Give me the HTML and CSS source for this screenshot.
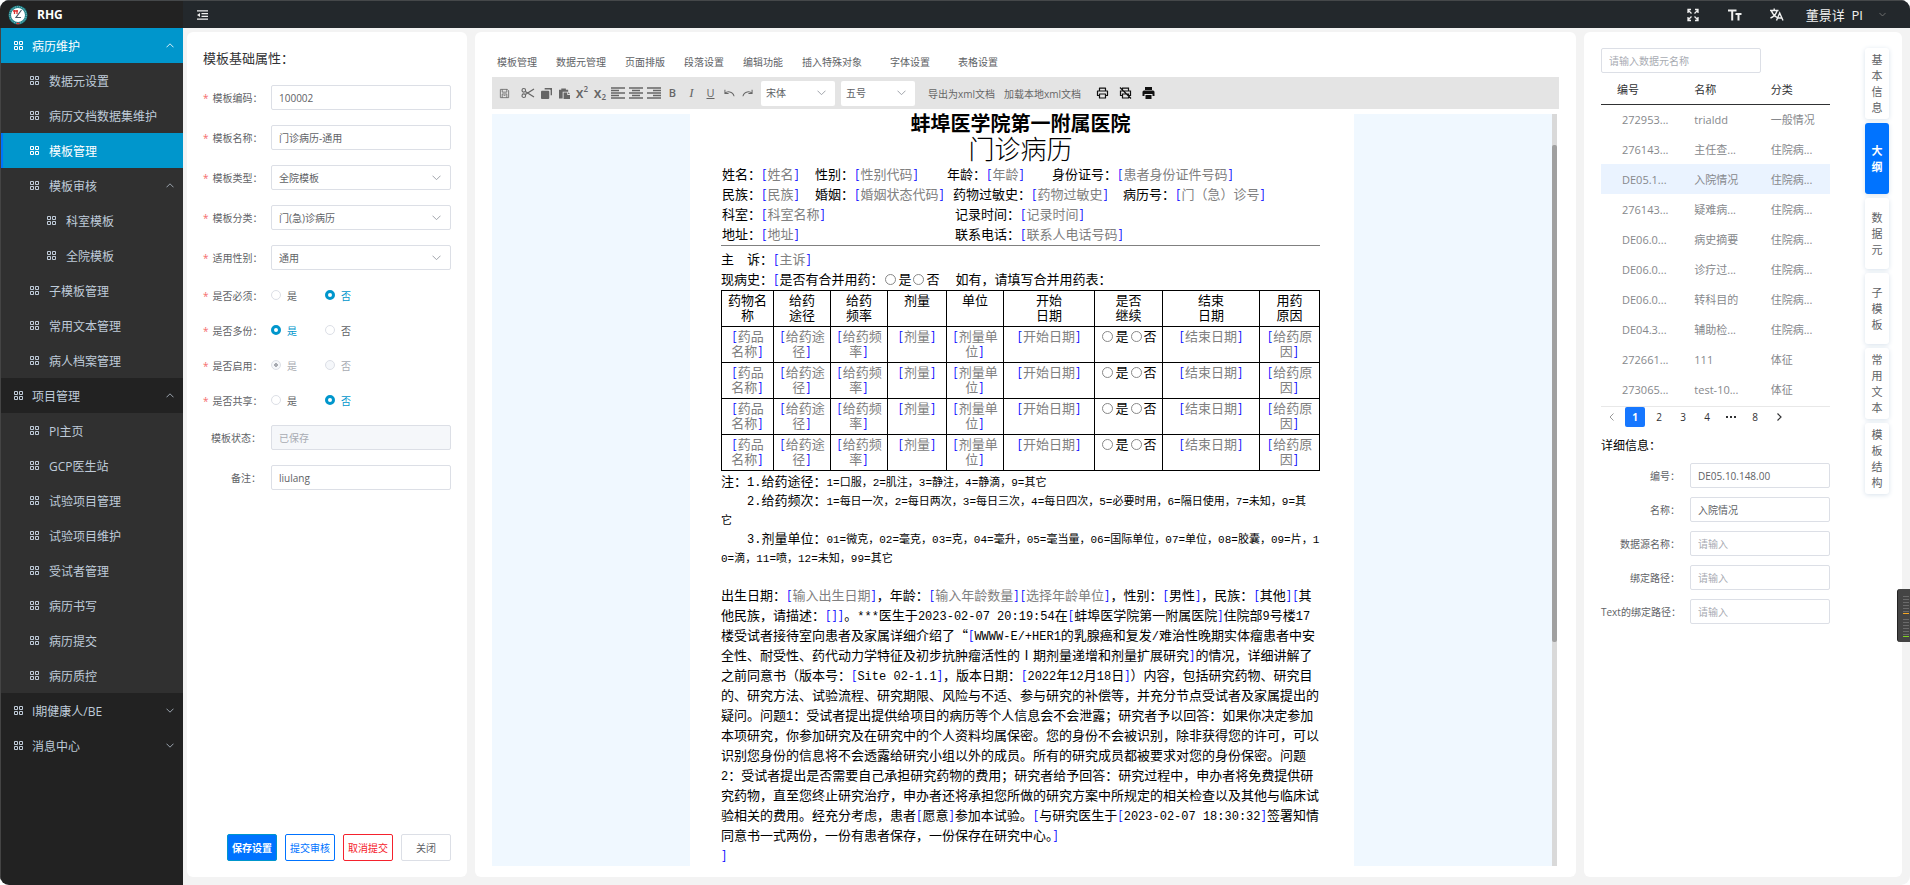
FILE: index.html
```
<!DOCTYPE html>
<html lang="zh-CN">
<head>
<meta charset="utf-8">
<title>RHG</title>
<link rel="stylesheet" href="styles.css">
</head>
<body>
<svg class="defs" aria-hidden="true">
  <symbol id="grid" viewBox="0 0 9 9"><path d="M.5.5h3v3h-3zM5.5.5h3v3h-3zM.5 5.5h3v3h-3zM5.5 5.5h3v3h-3z" fill="none" stroke="currentColor"/></symbol>
  <symbol id="up" viewBox="0 0 8 5"><path d="M.5 4.3 4 .8l3.500 3.500" fill="none" stroke="currentColor"/></symbol>
  <symbol id="down" viewBox="0 0 8 5"><path d="M.5.7 4 4.200 7.500.7" fill="none" stroke="currentColor"/></symbol>
</svg>
<div class="app">
  <header class="brand">
    <svg class="logo" viewBox="0 0 20 20"><circle cx="10" cy="10" r="9.500" fill="#1c7f86"/><circle cx="10" cy="10" r="8.300" fill="none" stroke="#b9dcdc" stroke-width=".8" stroke-dasharray="1 1"/><circle cx="10" cy="10" r="7" fill="#fff"/><path d="M5 6h5M6.500 5v4M9 5v4" stroke="#d33" stroke-width="1.300"/><path d="M13.500 5 8 12.500h5" fill="none" stroke="#4a5a66" stroke-width="1.200"/><path d="M8.500 18.500h3" stroke="#e33" stroke-width="1.500"/></svg>
    <strong>RHG</strong>
  </header>
  <header class="topbar">
    <button class="icon-btn" aria-label="折叠菜单"><svg width="11" height="10" viewBox="0 0 11 10"><path d="M0 .8h11M4.500 3.600H11M4.500 6.400H11M0 9.200h11" stroke="currentColor" stroke-width="1.200"/><path d="M0 5l3-2v4z" fill="currentColor"/></svg></button>
    <div class="tools">
      <button class="icon-btn" aria-label="全屏"><svg width="14" height="14" viewBox="0 0 14 14"><path d="M5.500 5.500 2 2m0 3V1.500h3M8.500 5.500 12 2m0 3V1.500H9M5.500 8.500 2 12m0-3v3.500h3M8.500 8.500 12 12m0-3v3.500H9" fill="none" stroke="currentColor" stroke-width="1.300"/></svg></button>
      <button class="icon-btn" aria-label="字号"><svg width="14" height="12" viewBox="0 0 14 12"><path d="M0 1.500h8.500M4.200 1.500V11.500M7.500 5h6M10.500 5v6.500" fill="none" stroke="currentColor" stroke-width="2"/></svg></button>
      <button class="icon-btn" aria-label="语言"><svg width="14" height="13" viewBox="0 0 14 13"><path d="M0 2.500h8.500M4.200.5v2M1.500 3c1 3 3 5 5.500 6.500M7 3C6 6 4 8.500.5 10M6.500 12.500 9.700 5l3.300 7.500M7.800 10h4" fill="none" stroke="currentColor" stroke-width="1.400"/></svg></button>
      <button class="user">董景详&nbsp; PI<svg width="7" height="5"><use href="#down"/></svg></button>
    </div>
  </header>

  <nav class="side">
    <a href="#" class="l1 on"><svg><use href="#grid"/></svg>病历维护<svg class="arr"><use href="#up"/></svg></a>
    <a href="#" class="l2"><svg><use href="#grid"/></svg>数据元设置</a>
    <a href="#" class="l2"><svg><use href="#grid"/></svg>病历文档数据集维护</a>
    <a href="#" class="l2 on cur"><svg><use href="#grid"/></svg>模板管理</a>
    <a href="#" class="l2"><svg><use href="#grid"/></svg>模板审核<svg class="arr"><use href="#up"/></svg></a>
    <a href="#" class="l2 l3"><svg><use href="#grid"/></svg>科室模板</a>
    <a href="#" class="l2 l3"><svg><use href="#grid"/></svg>全院模板</a>
    <a href="#" class="l2"><svg><use href="#grid"/></svg>子模板管理</a>
    <a href="#" class="l2"><svg><use href="#grid"/></svg>常用文本管理</a>
    <a href="#" class="l2"><svg><use href="#grid"/></svg>病人档案管理</a>
    <a href="#" class="l1"><svg><use href="#grid"/></svg>项目管理<svg class="arr"><use href="#up"/></svg></a>
    <a href="#" class="l2"><svg><use href="#grid"/></svg>PI主页</a>
    <a href="#" class="l2"><svg><use href="#grid"/></svg>GCP医生站</a>
    <a href="#" class="l2"><svg><use href="#grid"/></svg>试验项目管理</a>
    <a href="#" class="l2"><svg><use href="#grid"/></svg>试验项目维护</a>
    <a href="#" class="l2"><svg><use href="#grid"/></svg>受试者管理</a>
    <a href="#" class="l2"><svg><use href="#grid"/></svg>病历书写</a>
    <a href="#" class="l2"><svg><use href="#grid"/></svg>病历提交</a>
    <a href="#" class="l2"><svg><use href="#grid"/></svg>病历质控</a>
    <a href="#" class="l1"><svg><use href="#grid"/></svg>I期健康人/BE<svg class="arr"><use href="#down"/></svg></a>
    <a href="#" class="l1"><svg><use href="#grid"/></svg>消息中心<svg class="arr"><use href="#down"/></svg></a>
  </nav>

  <main class="main">
    <form class="card props">
      <h2>模板基础属性：</h2>
      <div class="row"><label for="code"><em>*</em>模板编码：</label><input id="code" class="ctl" value="100002"></div>
      <div class="row"><label for="name"><em>*</em>模板名称：</label><input id="name" class="ctl" value="门诊病历-通用"></div>
      <div class="row"><label for="type"><em>*</em>模板类型：</label><select id="type" class="ctl"><option>全院模板</option></select></div>
      <div class="row"><label for="cls"><em>*</em>模板分类：</label><select id="cls" class="ctl"><option>门(急)诊病历</option></select></div>
      <div class="row"><label for="sex"><em>*</em>适用性别：</label><select id="sex" class="ctl"><option>通用</option></select></div>
      <div class="row"><span class="lbl"><em>*</em>是否必须：</span><div class="radios"><label><input type="radio" name="r1">是</label><label><input type="radio" name="r1" checked>否</label></div></div>
      <div class="row"><span class="lbl"><em>*</em>是否多份：</span><div class="radios"><label><input type="radio" name="r2" checked>是</label><label><input type="radio" name="r2">否</label></div></div>
      <div class="row"><span class="lbl"><em>*</em>是否启用：</span><div class="radios"><label><input type="radio" name="r3" checked disabled>是</label><label><input type="radio" name="r3" disabled>否</label></div></div>
      <div class="row"><span class="lbl"><em>*</em>是否共享：</span><div class="radios"><label><input type="radio" name="r4">是</label><label><input type="radio" name="r4" checked>否</label></div></div>
      <div class="row"><label for="state">模板状态：</label><input id="state" class="ctl" value="已保存" disabled></div>
      <div class="row"><label for="memo">备注：</label><input id="memo" class="ctl" value="liulang"></div>
      <div class="actions"><button type="button" class="btn primary">保存设置</button><button type="button" class="btn blue">提交审核</button><button type="button" class="btn red">取消提交</button><button type="button" class="btn">关闭</button></div>
    </form>

    <section class="card editor">
      <div class="menus"><button>模板管理</button><button>数据元管理</button><button>页面排版</button><button>段落设置</button><button>编辑功能</button><button>插入特殊对象</button><button class="far">字体设置</button><button class="far">表格设置</button></div>
      <div class="bar">
        <button class="save" aria-label="保存"><svg viewBox="0 0 12 12"><path d="M1.500 1.500h7.500l1.500 1.500v7.500h-9zM3.500 1.500v3h5v-3M3.500 10.500v-4h5v4M5 8h2" fill="none" stroke="currentColor" stroke-width=".9"/></svg></button>
        <button aria-label="剪切"><svg class="w" viewBox="0 0 14 12"><path d="M13 2 4.300 7.500M13 10 4.300 4.500" stroke="currentColor" stroke-width="1.300"/><circle cx="2.800" cy="3.300" r="1.800" fill="none" stroke="currentColor" stroke-width="1.100"/><circle cx="2.800" cy="8.700" r="1.800" fill="none" stroke="currentColor" stroke-width="1.100"/></svg></button>
        <button aria-label="复制"><svg viewBox="0 0 12 12"><path d="M4 0h8v8h-1.500V2.500a1 1 0 0 0-1-1H4z" fill="currentColor"/><rect y="3" width="9" height="9" rx="1" fill="currentColor"/></svg></button>
        <button aria-label="粘贴"><svg viewBox="0 0 12 12"><path d="M0 2h2.500V.5h5V2H10v2H4v7.500H0z" fill="currentColor"/><path d="M5 5h4v2.500h3V12H5zM10 4.500 12 6.500h-2z" fill="currentColor"/></svg></button>
        <button class="x" aria-label="上标">x<sup>2</sup></button>
        <button class="x" aria-label="下标">x<sub>2</sub></button>
        <button aria-label="左对齐"><svg class="w" viewBox="0 0 14 12"><path d="M0 1h14M0 3.500h8M0 6h14M0 8.500h8M0 11h14" stroke="currentColor" stroke-width="1.600"/></svg></button>
        <button aria-label="居中"><svg class="w" viewBox="0 0 14 12"><path d="M0 1h14M3 3.500h8M0 6h14M3 8.500h8M0 11h14" stroke="currentColor" stroke-width="1.600"/></svg></button>
        <button aria-label="右对齐"><svg class="w" viewBox="0 0 14 12"><path d="M0 1h14M6 3.500h8M0 6h14M6 8.500h8M0 11h14" stroke="currentColor" stroke-width="1.600"/></svg></button>
        <button class="x b" aria-label="加粗">B</button>
        <button class="x i" aria-label="斜体">I</button>
        <button class="x u" aria-label="下划线">U</button>
        <button aria-label="撤销"><svg viewBox="0 0 12 12"><path d="M1 2v4h4M1.200 6C3 3.500 9.500 3 11 9" fill="none" stroke="currentColor" stroke-width="1.100"/></svg></button>
        <button class="redo" aria-label="重做"><svg viewBox="0 0 12 12"><path d="M11 2v4H7M10.800 6C9 3.500 2.500 3 1 9" fill="none" stroke="currentColor" stroke-width="1.100"/></svg></button>
        <select class="ctl" aria-label="字体"><option>宋体</option></select>
        <select class="ctl" aria-label="字号"><option>五号</option></select>
        <button class="txt">导出为xml文档</button><button class="txt">加载本地xml文档</button>
        <button class="prn" aria-label="打印"><svg viewBox="0 0 12 12"><path d="M3 4V1.200h6V4M3 8.500H1V4h10v4.500H9M3 7h6v4H3z" fill="none" stroke="currentColor" stroke-width="1.200" stroke-linejoin="round"/></svg></button>
        <button class="prn" aria-label="禁止打印"><svg viewBox="0 0 12 12"><path d="M3 4V1.200h6V4M3 8.500H1V4h10v4.500H9M3 7h6v4H3zM.5.5l11 11" fill="none" stroke="currentColor" stroke-width="1.200"/></svg></button>
        <button class="prn" aria-label="快速打印"><svg viewBox="0 0 12 12"><path d="M2.500 0h7v3h-7zM1.500 3.500h9A1.500 1.500 0 0 1 12 5v4h-2V7H2v2H0V5a1.500 1.500 0 0 1 1.500-1.500zM3 8h6v4H3z" fill="currentColor"/></svg></button>
      </div>
      <div class="canvas">
        <article class="page">
          <h1>蚌埠医学院第一附属医院</h1>
          <h3>门诊病历</h3>
          <div class="info a"><span>姓名：<b>[</b><i>姓名</i><b>]</b></span><span>性别：<b>[</b><i>性别代码</i><b>]</b></span><span>年龄：<b>[</b><i>年龄</i><b>]</b></span><span>身份证号：<b>[</b><i>患者身份证件号码</i><b>]</b></span></div>
          <div class="info b4"><span>民族：<b>[</b><i>民族</i><b>]</b></span><span>婚姻：<b>[</b><i>婚姻状态代码</i><b>]</b></span><span>药物过敏史：<b>[</b><i>药物过敏史</i><b>]</b></span><span>病历号：<b>[</b><i>门（急）诊号</i><b>]</b></span></div>
          <div class="info c"><span>科室：<b>[</b><i>科室名称</i><b>]</b></span><span>记录时间：<b>[</b><i>记录时间</i><b>]</b></span></div>
          <div class="info c"><span>地址：<b>[</b><i>地址</i><b>]</b></span><span>联系电话：<b>[</b><i>联系人电话号码</i><b>]</b></span></div>
          <hr>
          <p>主　诉：<b>[</b><i>主诉</i><b>]</b></p>
          <p>现病史：<b>[</b>是否有合并用药：<label><input type="radio" name="d0">是</label><label><input type="radio" name="d0">否</label>　&nbsp;如有，请填写合并用药表：</p>
          <table class="drugs">
            <colgroup><col class="k1"><col class="k2"><col class="k2"><col class="k3"><col class="k2"><col class="k4"><col class="k5"><col class="k6"><col class="k7"></colgroup>
            <tr><th>药物名<br>称</th><th>给药<br>途径</th><th>给药<br>频率</th><th>剂量</th><th>单位</th><th>开始<br>日期</th><th>是否<br>继续</th><th>结束<br>日期</th><th>用药<br>原因</th></tr>
            <tr><td><b>[</b><i>药品<br>名称</i><b>]</b></td><td><b>[</b><i>给药途<br>径</i><b>]</b></td><td><b>[</b><i>给药频<br>率</i><b>]</b></td><td><b>[</b><i>剂量</i><b>]</b></td><td><b>[</b><i>剂量单<br>位</i><b>]</b></td><td><b>[</b><i>开始日期</i><b>]</b></td><td><label><input type="radio" name="d1">是</label><label><input type="radio" name="d1">否</label></td><td><b>[</b><i>结束日期</i><b>]</b></td><td><b>[</b><i>给药原<br>因</i><b>]</b></td></tr>
            <tr><td><b>[</b><i>药品<br>名称</i><b>]</b></td><td><b>[</b><i>给药途<br>径</i><b>]</b></td><td><b>[</b><i>给药频<br>率</i><b>]</b></td><td><b>[</b><i>剂量</i><b>]</b></td><td><b>[</b><i>剂量单<br>位</i><b>]</b></td><td><b>[</b><i>开始日期</i><b>]</b></td><td><label><input type="radio" name="d2">是</label><label><input type="radio" name="d2">否</label></td><td><b>[</b><i>结束日期</i><b>]</b></td><td><b>[</b><i>给药原<br>因</i><b>]</b></td></tr>
            <tr><td><b>[</b><i>药品<br>名称</i><b>]</b></td><td><b>[</b><i>给药途<br>径</i><b>]</b></td><td><b>[</b><i>给药频<br>率</i><b>]</b></td><td><b>[</b><i>剂量</i><b>]</b></td><td><b>[</b><i>剂量单<br>位</i><b>]</b></td><td><b>[</b><i>开始日期</i><b>]</b></td><td><label><input type="radio" name="d3">是</label><label><input type="radio" name="d3">否</label></td><td><b>[</b><i>结束日期</i><b>]</b></td><td><b>[</b><i>给药原<br>因</i><b>]</b></td></tr>
            <tr><td><b>[</b><i>药品<br>名称</i><b>]</b></td><td><b>[</b><i>给药途<br>径</i><b>]</b></td><td><b>[</b><i>给药频<br>率</i><b>]</b></td><td><b>[</b><i>剂量</i><b>]</b></td><td><b>[</b><i>剂量单<br>位</i><b>]</b></td><td><b>[</b><i>开始日期</i><b>]</b></td><td><label><input type="radio" name="d4">是</label><label><input type="radio" name="d4">否</label></td><td><b>[</b><i>结束日期</i><b>]</b></td><td><b>[</b><i>给药原<br>因</i><b>]</b></td></tr>
          </table>
          <div class="notes">
            <p>注：<s>1.</s>给药途径：<small><s>1=</s>口服，<s>2=</s>肌注，<s>3=</s>静注，<s>4=</s>静滴，<s>9=</s>其它</small></p>
            <p class="in"><s>2.</s>给药频次：<small><s>1=</s>每日一次，<s>2=</s>每日两次，<s>3=</s>每日三次，<s>4=</s>每日四次，<s>5=</s>必要时用，<s>6=</s>隔日使用，<s>7=</s>未知，<s>9=</s>其<br>它</small></p>
            <p class="in"><s>3.</s>剂量单位：<small><s>01=</s>微克，<s>02=</s>毫克，<s>03=</s>克，<s>04=</s>毫升，<s>05=</s>毫当量，<s>06=</s>国际单位，<s>07=</s>单位，<s>08=</s>胶囊，<s>09=</s>片，<s>1<br>0=</s>滴，<s>11=</s>喷，<s>12=</s>未知，<s>99=</s>其它</small></p>
          </div>
          <p class="body">出生日期：<b>[</b><i>输入出生日期</i><b>]</b>，年龄：<b>[</b><i>输入年龄数量</i><b>]</b><b>[</b><i>选择年龄单位</i><b>]</b>，性别：<b>[</b>男性<b>]</b>，民族：<b>[</b>其他<b>]</b><b>[</b>其<br>
他民族，请描述：<b>[</b><b>]</b><b>]</b>。<s>***</s>医生于<s>2023-02-07 20:19:54</s>在<b>[</b>蚌埠医学院第一附属医院<b>]</b>住院部<s>9</s>号楼<s>17</s><br>
楼受试者接待室向患者及家属详细介绍了“<b>[</b><s>WWWW-E/+HER1</s>的乳腺癌和复发<s>/</s>难治性晚期实体瘤患者中安<br>
全性、耐受性、药代动力学特征及初步抗肿瘤活性的Ⅰ期剂量递增和剂量扩展研究<b>]</b>的情况，详细讲解了<br>
之前同意书（版本号：<b>[</b><s>Site 02-1.1</s><b>]</b>，版本日期：<b>[</b><s>2022</s>年<s>12</s>月<s>18</s>日<b>]</b>）内容，包括研究药物、研究目<br>
的、研究方法、试验流程、研究期限、风险与不适、参与研究的补偿等，并充分节点受试者及家属提出的<br>
疑问。问题<s>1</s>：受试者提出提供给项目的病历等个人信息会不会泄露；研究者予以回答：如果你决定参加<br>
本项研究，你参加研究及在研究中的个人资料均属保密。您的身份不会被识别，除非获得您的许可，可以<br>
识别您身份的信息将不会透露给研究小组以外的成员。所有的研究成员都被要求对您的身份保密。问题<br>
<s>2</s>：受试者提出是否需要自己承担研究药物的费用；研究者给予回答：研究过程中，申办者将免费提供研<br>
究药物，直至您终止研究治疗，申办者还将承担您所做的研究方案中所规定的相关检查以及其他与临床试<br>
验相关的费用。经充分考虑，患者<b>[</b>愿意<b>]</b>参加本试验。<b>[</b>与研究医生于<b>[</b><s>2023-02-07 18:30:32</s><b>]</b>签署知情<br>
同意书一式两份，一份有患者保存，一份保存在研究中心。<b>]</b><br><b>]</b></p>
        </article>
        <div class="track"><div class="thumb"></div></div>
      </div>
    </section>

    <aside class="card detail">
      <div class="pane">
        <input class="ctl search" placeholder="请输入数据元名称" aria-label="数据元名称">
        <table class="list">
          <thead><tr><th>编号</th><th>名称</th><th>分类</th></tr></thead>
          <tbody>
            <tr><td>272953...</td><td>trialdd</td><td>一般情况</td></tr>
            <tr><td>276143...</td><td>主任查...</td><td>住院病...</td></tr>
            <tr class="sel"><td>DE05.1...</td><td>入院情况</td><td>住院病...</td></tr>
            <tr><td>276143...</td><td>疑难病...</td><td>住院病...</td></tr>
            <tr><td>DE06.0...</td><td>病史摘要</td><td>住院病...</td></tr>
            <tr><td>DE06.0...</td><td>诊疗过...</td><td>住院病...</td></tr>
            <tr><td>DE06.0...</td><td>转科目的</td><td>住院病...</td></tr>
            <tr><td>DE04.3...</td><td>辅助检...</td><td>住院病...</td></tr>
            <tr><td>272661...</td><td>111</td><td>体征</td></tr>
            <tr><td>273065...</td><td>test-10...</td><td>体征</td></tr>
          </tbody>
        </table>
        <div class="pager"><button aria-label="上一页" class="dim"><svg width="5" height="8"><path d="M4.500.5 1 4l3.500 3.500" fill="none" stroke="currentColor"/></svg></button><button class="now">1</button><button>2</button><button>3</button><button>4</button><button aria-label="更多"><svg width="10" height="2"><path d="M0 0h2v2H0zM4 0h2v2H4zM8 0h2v2H8z" fill="currentColor"/></svg></button><button>8</button><button aria-label="下一页"><svg width="5" height="8"><path d="M.5.5 4 4 .5 7.500" fill="none" stroke="currentColor" stroke-width="1.200"/></svg></button></div>
        <h4>详细信息：</h4>
        <div class="drow"><label for="d-id">编号：</label><input id="d-id" class="ctl" value="DE05.10.148.00"></div>
        <div class="drow"><label for="d-nm">名称：</label><input id="d-nm" class="ctl" value="入院情况"></div>
        <div class="drow"><label for="d-src">数据源名称：</label><input id="d-src" class="ctl" placeholder="请输入"></div>
        <div class="drow"><label for="d-path">绑定路径：</label><input id="d-path" class="ctl" placeholder="请输入"></div>
        <div class="drow"><label for="d-text">Text的绑定路径：</label><input id="d-text" class="ctl" placeholder="请输入"></div>
      </div>
      <div class="vtabs"><button>基<br>本<br>信<br>息</button><button class="on">大<br>纲</button><button>数<br>据<br>元</button><button>子<br>模<br>板</button><button>常<br>用<br>文<br>本</button><button>模<br>板<br>结<br>构</button></div>
    </aside>
  </main>
  <div class="meter"><span></span><span></span></div>
</div>
</body>
</html>
```
FILE: styles.css
```
* { box-sizing: border-box; }
body { margin: 0; background: #fff; font-family: "Open Sans", "Noto Sans CJK SC", sans-serif; font-size: 10px; color: #606266; }
button, input, select { font: inherit; color: inherit; margin: 0; }
button { background: none; border: 0; padding: 0; cursor: pointer; }
h1, h2, h3, h4, p { margin: 0; font-weight: 400; }
a { text-decoration: none; }
.defs { display: none; }

.app { height: 100vh; display: grid; grid-template: 28px minmax(0, 1fr) / 183px minmax(0, 1fr); border-radius: 9px; overflow: hidden; background: #f3f3f3; }
.brand { background: #222; display: flex; align-items: center; gap: 9px; padding-left: 8px; color: #fff; font-size: 12px; border-top: 1px solid #45484a; }
.logo { width: 20px; height: 20px; }
.topbar { background: #23282c; color: #f0f0f0; display: flex; align-items: center; justify-content: space-between; padding: 0 24px 0 14px; border-top: 1px solid #45484a; }
.icon-btn { display: flex; }
.tools { display: flex; align-items: center; gap: 28px; }
.user { display: flex; align-items: center; gap: 16px; font-size: 13px; }
.user svg { color: #777; }
.tools .user { margin-left: -6px; }

.side { background: #222; border-left: 1px solid #444; overflow: hidden; }
.side a { height: 35px; display: flex; align-items: center; gap: 10px; padding: 0 9px 0 13px; font-size: 12px; color: #bfcbd9; }
.side .l1 { gap: 9px; }
.side svg { width: 9px; height: 9px; flex: none; }
.side .arr { width: 8px; height: 5px; margin-left: auto; color: #9aa3ad; }
.side .l2 { background: #303030; padding-left: 29px; }
.side .l3 { padding-left: 46px; }
.side .on { background: #0096cc; color: #fff; }
.side .on .arr { color: #d5eef8; }
.side .cur { border-left: 2px solid #0073ff; padding-left: 27px; }

.main { display: grid; grid-template-columns: 280px minmax(0, 1fr) 318px; gap: 8px; padding: 4px 8px 8px 4px; min-height: 0; }
.card { background: #fff; border-radius: 6px; min-height: 0; min-width: 0; }

.ctl { width: 100%; height: 25px; border: 1px solid #dcdfe6; border-radius: 2px; padding: 0 7px; background: #fff; color: #606266; font-size: 10px; outline: 0; }
.ctl::placeholder { color: #a8abb2; }
.ctl:disabled { background: #f5f7fa; color: #a8abb2; }
select.ctl { appearance: none; background: #fff url("data:image/svg+xml,%3Csvg xmlns='http://www.w3.org/2000/svg' width='9' height='6'%3E%3Cpath d='M.5.700 4.500 4.700 8.500.700' fill='none' stroke='%23a0a4ab'/%3E%3C/svg%3E") no-repeat right 9px center; }

.props { display: flex; flex-direction: column; gap: 15px; padding: 16px 16px 16px; }
.props h2 { font-size: 13px; line-height: 20px; color: #303133; margin-bottom: 2px; }
.row { display: grid; grid-template-columns: 58px minmax(0, 1fr); gap: 10px; align-items: center; }
.row > label, .lbl { text-align: right; white-space: nowrap; }
.row em { color: #f56c6c; font-style: normal; margin-right: 4px; }
.radios { display: flex; gap: 28px; height: 20px; align-items: center; }
.radios label { display: flex; align-items: center; gap: 6px; }
.radios input { appearance: none; width: 10px; height: 10px; border: 1px solid #dcdfe6; border-radius: 50%; background: #fff; }
.radios input:checked { border: 3px solid #0096cc; }
.radios label:has(:checked) { color: #0096cc; }
.radios input:disabled { background: #f5f7fa; }
.radios input:disabled:checked { border: 1px solid #dcdfe6; background: radial-gradient(circle, #a8abb2 2px, #f5f7fa 2px); }
.radios label:has(:disabled) { color: #a8abb2; }
.actions { margin-top: auto; display: flex; justify-content: flex-end; gap: 8px; }
.btn { width: 50px; height: 27px; border: 1px solid #dcdfe6; border-radius: 2px; }
.primary { background: #0073ff; border-color: #0096cc; color: #fff; font-weight: 700; }
.blue { border-color: #0073ff; color: #0073ff; }
.red { border-color: #f5222d; color: #f5222d; }

.editor { padding: 19px 17px 11px; display: flex; flex-direction: column; }
.menus { display: flex; gap: 19px; padding-left: 5px; height: 20px; margin-bottom: 6px; align-items: center; }
.menus .far { margin-left: 9px; }
.bar { background: #e4e4e4; height: 32px; margin-bottom: 5px; padding: 0 5px; display: flex; align-items: center; gap: 4px; flex: none; color: #666; }
.bar button { display: flex; align-items: center; justify-content: center; width: 14px; height: 20px; flex: none; }
.bar svg { width: 11px; height: 11px; }
.bar svg.w { width: 14px; height: 12px; }
.bar .save { margin-right: 6px; }
.bar .x { font-size: 14px; line-height: 14px; font-weight: 600; }
.bar sup, .bar sub { font-size: 8px; line-height: 8px; }
.bar sup { margin-bottom: 8px; }
.bar sub { margin-top: 8px; }
.bar .b, .bar .i, .bar .u, .bar .redo { width: 15px; }
.bar .b { font-size: 11px; }
.bar .i { font: italic 13px "Liberation Serif", serif; }
.bar .u { font-size: 11px; font-weight: 400; text-decoration: underline; }
.bar .ctl { width: 74px; border: 0; padding-left: 5px; margin-left: 2px; }
.bar .txt { width: auto; margin-left: 9px; }
.bar .txt + .txt { margin-left: 5px; }
.bar .prn { color: #111; margin-left: 5px; }
.bar .prn svg { width: 13px; height: 12px; }
.bar .txt + .prn { margin-left: 10px; }

.canvas { flex: 1; min-height: 0; background: #f0f8ff; display: flex; margin-right: 2px; }
.page { flex: 0 1 663px; margin: 0 auto; background: #fff; padding: 0 34px 0 31px; font-family: "Noto Sans CJK SC", sans-serif; font-size: 13px; line-height: 20px; color: #000; white-space: nowrap; }
.page h1 { font-size: 20px; line-height: 18px; font-weight: 700; text-align: center; }
.page h3 { font-size: 26px; line-height: 32px; font-weight: 300; text-align: center; }
.page b { font-weight: 400; color: #00f; padding: 0 1px; }
.page i { font-style: normal; color: #808080; }
.page s { text-decoration: none; font-family: "Liberation Mono", monospace; font-size: 12px; line-height: 12px; }
.info { display: grid; padding-left: 1px; }
.info.a { grid-template-columns: 93px 132px 105px auto; }
.info.b4 { grid-template-columns: 93px 138px 170px auto; }
.info.c { grid-template-columns: 233px auto; }
.page hr { border: 0; border-top: 1px solid #808080; margin: 1px 0 3px; }
.page input { appearance: none; width: 11px; height: 11px; border: 1px solid #888; border-radius: 50%; margin: 0 2px; vertical-align: -1px; }
.drugs { width: 100%; border-collapse: collapse; table-layout: fixed; line-height: 15px; text-align: center; margin-top: 1px; }
.drugs th, .drugs td { border: 1px solid #000; padding: 1px 0 4px; font-weight: 400; vertical-align: top; }
.k1 { width: 52px; }
.k2 { width: 57px; }
.k3 { width: 59px; }
.k4 { width: 91px; }
.k5 { width: 68px; }
.k6 { width: 97px; }
.k7 { width: 60px; }
.notes { line-height: 19px; }
.notes .in { text-indent: 26px; }
.notes small { font-size: 11px; line-height: 11px; }
.notes small s { font-size: 11px; line-height: 11px; }
.body { margin-top: 19px; }
.track { width: 5px; background: #d9d9d9; padding: 31px 0 0; }
.thumb { height: 69%; background: #a0a0a0; border-radius: 2px; }

.detail { display: flex; justify-content: space-between; padding: 16px 13px 0 17px; }
.pane { width: 229px; }
.search { width: 160px; display: block; }
.list { width: 100%; border-collapse: collapse; table-layout: fixed; font-size: 11px; text-align: left; margin: 2px 0; }
.list th { height: 29px; padding: 0 0 0 16px; font-weight: 400; color: #303133; border-bottom: 1px solid #303133; }
.list td { height: 30px; padding: 0 0 0 17px; color: #86888c; }
.list td:first-child { padding-left: 21px; }
.list th + th { padding-left: 17px; }
.list .sel { background: #eaf3ff; }
.pager { display: flex; gap: 4px; margin-bottom: 9px; color: #303133; border-top: 1px solid #e8e8e8; }
.pager button { width: 20px; height: 20px; display: flex; align-items: center; justify-content: center; }
.pager .now { background: #1677ff; color: #fff; font-weight: 700; border-radius: 2px; }
.pager .dim { color: #999; }
.detail h4 { font-size: 12px; line-height: 20px; color: #000; margin-bottom: 7px; }
.drow { display: grid; grid-template-columns: 79px minmax(0, 1fr); gap: 10px; align-items: center; margin-bottom: 9px; }
.drow label { text-align: right; white-space: nowrap; }
.vtabs { display: flex; flex-direction: column; gap: 4px; }
.vtabs button { width: 24px; height: 71px; font-size: 11px; line-height: 16px; border-radius: 3px; background: #fff; box-shadow: 0 1px 5px #d8e2ec; }
.vtabs .on { background: #0073ff; color: #fff; font-weight: 700; }

.meter { position: fixed; right: 0; top: 589px; width: 13px; height: 53px; background: #444; border-radius: 3px 0 0 3px; border-left: 1px solid #222; padding: 7px 1px 0 5px; display: flex; flex-direction: column; gap: 5px; }
.meter span { height: 18px; background: repeating-linear-gradient(#6a6a6a 0 1px, #444 1px 3px); border-bottom: 1px solid #f5a623; }
.meter span + span { border-color: #7ed321; }
```
